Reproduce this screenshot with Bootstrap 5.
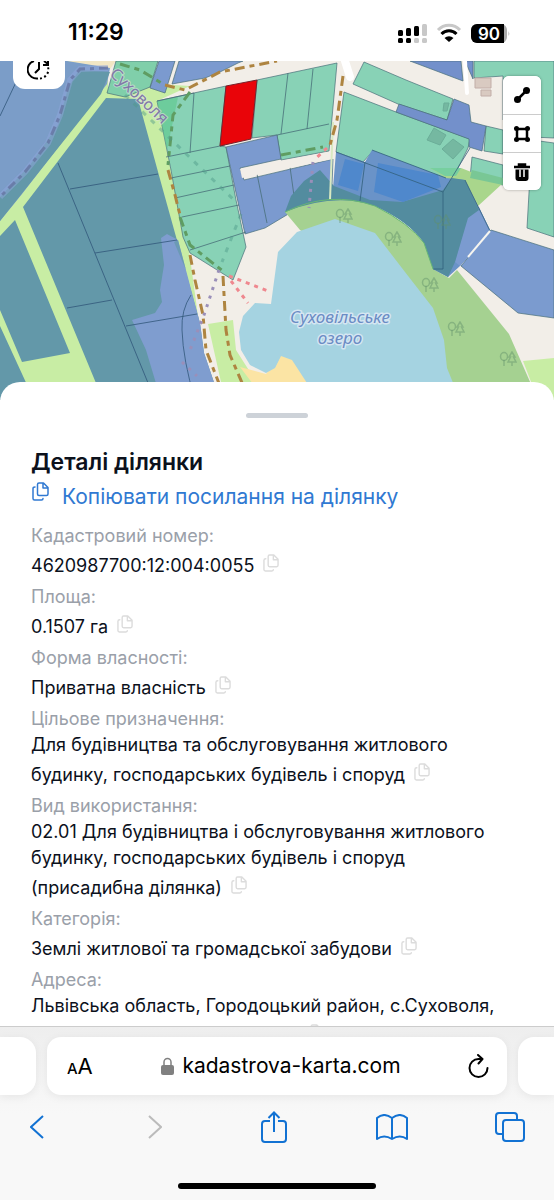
<!DOCTYPE html>
<html lang="uk">
<head>
<meta charset="utf-8">
<meta name="viewport" content="width=device-width, initial-scale=1">
<title>Кадастрова карта</title>
<link rel="stylesheet" href="https://cdn.jsdelivr.net/npm/bootstrap@5.3.0/dist/css/bootstrap.min.css">
<style>
  body { font-family: Inter, "Liberation Sans", sans-serif; color: #0c111c; background: #fff; }
  svg { display: block; }
  .status { height: 61px; padding: 4px 44px 0 68px; }
  .clock { font-size: 23px; font-weight: 600; color: #000; }
  .map-area { height: 339px; }
  .history { left: 13px; width: 52px; height: 28px; border-radius: 0 0 12px 12px; }
  .tools { top: 15px; right: 13px; width: 38px; border-radius: 6px; box-shadow: 0 0 3px #0005; }
  .tools button { height: 38px; }
  .tools button + button { border-top: 1px solid #ccc !important; }
  .sheet { margin-top: -18px; border-radius: 20px 20px 0 0; padding: 31px 31px 0; min-height: 0; }
  .grabber { width: 62px; height: 5px; background: #cdd2d8; }
  h1 { font-size: 23px; line-height: 30px; font-weight: 600; margin: 29px 0 0; }
  .copy-link { color: #3079d2; font-size: 21px; line-height: 30px; margin: 5px 0 11px; gap: 12px; }
  dl { font-size: 18px; line-height: 26px; padding-right: 16px; }
  dt { font-weight: 400; color: #9aa0a9; }
  dd { margin: 0 0 5px; }
  .copy { display: inline-block; height: 23px; padding: 4px 0 0; margin-left: 4px; color: #dcdcdc; vertical-align: baseline; }
  .unseen { display: inline-block; width: 266px; }
  .browser { background: linear-gradient(#eee, #f8f8f8 50%); border-top: 1px solid #ccc; padding-top: 10px; height: 174px; }
  .tab-row { gap: 11px; }
  .tab-edge { width: 36px; height: 58px; background: #fff; box-shadow: 0 2px 10px #0001; }
  .address { height: 58px; border-radius: 14px; padding: 0 18px 0 20px; box-shadow: 0 2px 10px #0001; color: #000; }
  .host { font-size: 21px; }
  .bar { padding: 0 22px 0 15px; margin-top: 10px; color: #1272d3; }
  .bar button { width: 44px; height: 44px; }
  .home-line { width: 198px; height: 6px; background: #000; margin-top: 34px; }
</style>
<script src="https://cdn.jsdelivr.net/npm/bootstrap@5.3.0/dist/js/bootstrap.bundle.min.js"></script>
</head>
<body class="d-flex flex-column vh-100 overflow-hidden">
<svg width="0" height="0" class="position-absolute" aria-hidden="true">
  <symbol id="copy" viewBox="0 0 17 19"><g fill="none" stroke="currentColor" stroke-width="1.5" stroke-linejoin="round" stroke-linecap="round"><path d="M7 1h4.500l4.500 4.500V12q0 1.500-1.500 1.500H7Q5.500 13.500 5.500 12V2.500Q5.500 1 7 1M11 1v5h5M3 5Q1 5 1 6.500V16.500Q1 18 2.500 18H9.500Q11 18 11 16.500"/></g></symbol>
  <symbol id="trees" viewBox="0 0 18 17"><g fill="none" stroke="#62916a" stroke-opacity=".45" stroke-width="1.500"><ellipse cx="5" cy="5.500" rx="3.500" ry="4"/><path d="M5 9v6M13 1l-3 5h1.500L9 11h8l-2.500-5H16zM13 11v4"/></g></symbol>
</svg>

<header class="status d-flex align-items-center justify-content-between flex-shrink-0">
  <span class="clock">11:29</span>
  <svg width="112" height="22" viewBox="0 0 112 22" role="img" aria-label="Мережа, Wi-Fi, батарея 90">
    <g><rect x="0" y="8" width="5" height="6" rx="1.500"/><rect x="8" y="6" width="5" height="8" rx="1.500"/><rect x="16" y="4" width="5" height="10" rx="1.500"/><rect x="24" y="2" width="5" height="12" rx="1.500" fill="#c8c8c8"/><rect x="0" y="16" width="5" height="5" rx="1.500"/><rect x="8" y="16" width="5" height="5" rx="1.500"/><rect x="16" y="16" width="5" height="5" rx="1.500" fill="#c8c8c8"/><rect x="24" y="16" width="5" height="5" rx="1.500" fill="#c8c8c8"/></g>
    <g fill="none" stroke-width="3"><path d="M40 8a15 15 0 0 1 22 0" stroke="#c8c8c8"/><path d="M43.500 12a10.500 10.500 0 0 1 15 0" stroke="#000"/></g><path d="M46.500 16a6.500 6.500 0 0 1 9 0L51 20z"/>
    <rect x="73" y="2" width="36" height="19" rx="6" fill="#aaa"/><path d="M79 2h27v19H79a6 6 0 0 1-6-6V8a6 6 0 0 1 6-6z"/><path d="M110.500 9v5q1.500-2.500 0-5" fill="#aaa"/>
    <text x="91" y="17.500" text-anchor="middle" fill="#fff" font-size="17" font-weight="600">90</text>
  </svg>
</header>

<main class="d-flex flex-column flex-fill overflow-hidden">
<section class="map-area position-relative flex-shrink-0">
  <svg class="w-100 h-100" viewBox="0 61 554 339" preserveAspectRatio="xMidYMin slice" role="img" aria-label="Карта ділянок">
    <rect y="61" width="554" height="339" fill="#f2eee8"/>
    <!-- fields on the left -->
    <path fill="#c8eda4" d="M0 61H108L108 90 157 84 190 86 157 101 175 190 189 250 203 353 220 400H0z"/>
    <path fill="#f2e6c4" d="M66 61H116L110 69z"/>
    <path fill="#7b9dc8" d="M0 61H67L110 68 107 84 22 194 0 221z"/>
    <path fill="#6398a9" d="M79 70L110 72 101 94 0 221V197L30 165 58 125 68 88z"/>
    <path fill="#6398a9" d="M15 220L70 353 22 362 0 310V236zM0 326L34 400H0zM106 98L138 99 163 190 200 323 204 353 220 400H103L23 207 36 190z"/>
    <path fill="#7f9dcf" d="M161 238L167 234 178 240 200 323 204 353 220 400H161L146 350 132 320 155 313 162 302 160 290 164 265z"/>
    <path fill="#6398a9" d="M174 242L178 240 186 270z" opacity=".7"/>
    <g fill="none" stroke="#31577a" stroke-width=".8"><path d="M0 116L18 78M58 163L155 400M70 189L158 174M95 253L177 240M67 308L112 300M126 326L197 314M191 295Q181 310 182 330 183 360 195 400"/></g>
    <path d="M108 68L80 69 70 80 60 115 48 143 25 172 0 197" stroke="#8fa5db" stroke-width="6" opacity=".5" fill="none"/>
    <path d="M108 68L80 69 70 80 60 115 48 143 25 172 0 197" fill="none" stroke="#64719f" stroke-width="3" stroke-dasharray="9 5 4 5" opacity=".75"/>
    <!-- teal and blue parcels -->
    <g stroke="#476f78" stroke-width=".7">
      <path fill="#80cfaa" d="M116 61H158L150 87 125 97 107 93z"/>
      <path fill="#7b9acf" d="M159 61H175L165 93 150 88zM179 61H243L238 63 220 72 205 78 172 84z"/>
      <path fill="#88d2b6" d="M157 101L226 86 220 146 226 147 236 200 246 247 233 280 190 253 183 237 171 170zM257 80L337 63 329 151 281 160 277 135 252 138z"/>
      <path fill="#7b9acf" d="M226 147L277 135 281 159 240 168 244 180 333 159 331 210 290 213 265 228 245 234z"/>
      <path fill="#88d2b6" d="M364 62L406 80 453 99 447 120 398 104 353 84zM344 92L396 112 470 139 468 148 446 192 372 152 363 162 336 152zM474 61H554V138L532 137 503 120V76L474 78zM486 126L503 130V154L484 151zM472 157L503 165V185L470 178zM532 140L554 143V237L527 228z"/>
      <path fill="#7390cb" d="M410 61H461L463 81zM465 61H473V79zM454 99L469 105 471 122 486 126 482 151 469 147 469 139 396 112 399 104 447 120z"/>
      <path fill="#7b9bcf" d="M491 230L554 250V318L518 313 461 266z"/>
    </g>
    <path fill="#5cc88a" opacity=".6" d="M157 101L178 97 167 150z"/>
    <path d="M157 101L194 93 190 153M277 135L329 124M288 73L281 134M313 69L307 129" fill="none" stroke="#476f78" stroke-width=".8"/>
    <path d="M166 157L225 145M171 178L230 166M175 198L234 185M182 217L239 205M190 250L246 232M257 174L267 223M290 167L296 210" fill="none" stroke="#476f78" stroke-width=".8"/>
    <path fill="#f2eee8" d="M240 169L333 151V159L242 178z"/>
    <path fill="#e90409" stroke="#76222b" d="M226 86L257 80 251 139 220 146z"/>
    <!-- park and lake -->
    <path fill="#a5d191" d="M285 212Q330 190 375 206 410 224 424 243L433 269 449 278 457 270 509 334 538 400H445L400 290 300 230z"/>
    <path fill="#c8eda4" d="M523 361L554 358V400H538zM208 324L233 320 236 350 250 372 280 400H225z"/>
    <path fill="#a9d68c" d="M430 168H461L502 184 478 206 465 190z"/>
    <path fill="#77cf9f" d="M430 168H461L456 176 445 176z"/>
    <path fill="#79c795" d="M472 170L503 178V185L470 178z"/>
    <path fill="#6a93c8" d="M336 152L365 162 372 150 446 178 465 180 490 230 468 257 460 266 448 277 433 269 424 243Q410 222 375 206 350 198 332 200z"/>
    <path fill="#7b9bd0" d="M479 207L490 230 468 257 460 266 455 262 467 218z"/>
    <path fill="#538c9f" d="M285 212L291 196 304 181 320 170 334 186 370 200 402 202 443 190 452 178 465 180 479 210 468 218 455 262 448 277 433 269 424 243Q410 222 375 206 335 192 285 212z"/>
    <path fill="#4f88cc" d="M345 159L364 164 358 191 338 185zM378 163L438 175 441 187 403 202 374 192z"/>
    <path fill="none" stroke="#315f7b" stroke-width=".8" d="M365 162L360 201M336 152L443 192 470 148M372 150L446 178M443 192V269H433M465 180L490 231"/>
    <path d="M333 122L330 200" stroke="#d9e9c2" stroke-width="2"/>
    <path d="M285 212Q330 190 375 206 410 224 424 243L433 269" fill="none" stroke="#67b773"/>
    <path d="M490 231L468 257" stroke="#f6f5f0" stroke-width="2"/>
    <path fill="#fbe4a4" d="M240 367L266 374 280 355 293 356 318 400H265z"/>
    <path fill="#a5d3e1" d="M318 400L292 360 281 356 275 368 266 373 250 365 241 350 239 332 243 316 255 303 271 304 278 252 297 232 335 219 375 233 405 272 433 308 444 340 447 368 460 400z"/>
    <g><use href="#trees" x="335" y="208" width="18" height="17"/><use href="#trees" x="384" y="231" width="18" height="17"/><use href="#trees" x="421" y="277" width="18" height="17"/><use href="#trees" x="447" y="321" width="18" height="17"/><use href="#trees" x="499" y="351" width="18" height="17"/><use href="#trees" x="433" y="214" width="18" height="17"/></g>
    <!-- buildings -->
    <g fill="#6fb09b" stroke="#62a28f" opacity=".75"><path d="M434 128L446 135 440 145 427 140zM453 139L464 147 453 159 442 149zM444 103H449L447 111H443z"/></g>
    <g fill="#d9cac1" stroke="#c2aea8"><path d="M475 78H491V88H475zM481 90H491V96H481z"/></g>
    <g fill="none" stroke="#fff" stroke-linecap="round"><path d="M465 61L467 93" stroke-width="4"/><path d="M345 61L350 77" stroke-width="8"/></g>
    <!-- tracks -->
    <g fill="none" stroke="#ae8440" stroke-width="3" stroke-dasharray="10 5 5 5">
      <path d="M165 85L185 90 220 72 277 61M168 170L175 195 180 215M190 255L195 280 203 315 206 350 220 386"/>
      <path d="M223 276L226 330 230 355 243 385"/>
      <path d="M343 76L337 120 330 145"/>
    </g>
    <g fill="none" stroke="#5f9d62" stroke-width="3" stroke-dasharray="10 5 5 5"><path d="M120 64L140 70 163 84M190 92L173 115 168 165M180 217L190 245 224 272M281 155L323 147"/></g>
    <g fill="none" stroke="#4d9987" stroke-width="3" stroke-dasharray="5 7" opacity=".45"><path d="M241 214L222 262M125 95L234 200"/></g>
    <g fill="none" stroke="#ef888f" stroke-width="3" stroke-dasharray="4 5"><path d="M229 276L268 291M231 281L248 303M327 148L314 160"/></g>
    <g fill="none" stroke="#9a8fb9" stroke-width="3" stroke-dasharray="3 6"><path d="M219 270L204 315 190 350M182 362L197 376M313 162L309 208"/></g>
    <!-- place names -->
    <g font-family="Noto Sans, sans-serif" paint-order="stroke" stroke-linejoin="round">
      <text transform="translate(109 75) rotate(43)" font-size="16" fill="#8178a8" stroke="#dfe6df" stroke-opacity=".6" stroke-width="2">Суховоля</text>
      <g font-size="17" font-style="italic" text-anchor="middle" fill="#6a8cc4" stroke="#d5e6f2" stroke-width="3"><text x="340" y="323">Суховільське</text><text x="340" y="344">озеро</text></g>
    </g>
  </svg>
  <button class="history position-absolute top-0 border-0 p-0 bg-white d-flex justify-content-center" aria-label="Історія">
    <svg width="24" height="20" viewBox="0 0 24 20" fill="none" stroke="#000" stroke-width="2"><path d="M7 0A9 9 0 0 0 11 17.500"/><path d="M13 17.500A9 9 0 0 0 21 6" stroke-dasharray="2 2.500"/><path d="M12 1V8L8 12M17 0L21 3M21 0V4H16"/></svg>
  </button>
  <div class="tools position-absolute bg-white d-flex flex-column overflow-hidden">
    <button class="border-0 p-0 bg-white d-flex align-items-center justify-content-center" aria-label="Виміряти відстань"><svg width="18" height="18" viewBox="0 0 18 18"><path d="M4 14L14 4" stroke="#000" stroke-width="2.500"/><circle cx="4.500" cy="13.500" r="3.500"/><circle cx="13.500" cy="4.500" r="3.500"/></svg></button>
    <button class="border-0 p-0 bg-white d-flex align-items-center justify-content-center" aria-label="Виміряти площу"><svg width="18" height="18" viewBox="0 0 18 18"><path d="M4 4H14V14H4z" fill="none" stroke="#000" stroke-width="2.500"/><circle cx="3.500" cy="3.500" r="2.500"/><circle cx="14.500" cy="3.500" r="2.500"/><circle cx="3.500" cy="14.500" r="2.500"/><circle cx="14.500" cy="14.500" r="2.500"/></svg></button>
    <button class="border-0 p-0 bg-white d-flex align-items-center justify-content-center" aria-label="Видалити"><svg width="16" height="18" viewBox="0 0 16 18"><path d="M0 4H16M5 3.500V1.500H11V3.500" fill="none" stroke="#000" stroke-width="2.500"/><path d="M1.500 6.500H14.500V15Q14.500 18 11.500 18H4.500Q1.500 18 1.500 15z"/><path d="M6 6.500V14M10 6.500V14" stroke="#fff" stroke-width="1.500"/></svg></button>
  </div>
</section>

<section class="sheet bg-white position-relative flex-fill overflow-hidden">
  <div class="grabber rounded-pill mx-auto"></div>
  <h1>Деталі ділянки</h1>
  <a href="#" class="copy-link d-flex text-decoration-none text-nowrap"><svg width="19" height="19"><use href="#copy"/></svg>Копіювати посилання на ділянку</a>
  <dl class="mb-0">
    <dt>Кадастровий номер:</dt>
    <dd>4620987700:12:004:0055 <button class="copy border-0 bg-transparent" aria-label="Копіювати"><svg width="16" height="18"><use href="#copy"/></svg></button></dd>
    <dt>Площа:</dt>
    <dd>0.1507 га <button class="copy border-0 bg-transparent" aria-label="Копіювати"><svg width="16" height="18"><use href="#copy"/></svg></button></dd>
    <dt>Форма власності:</dt>
    <dd>Приватна власність <button class="copy border-0 bg-transparent" aria-label="Копіювати"><svg width="16" height="18"><use href="#copy"/></svg></button></dd>
    <dt>Цільове призначення:</dt>
    <dd>Для будівництва та обслуговування житлового будинку, господарських будівель і споруд <button class="copy border-0 bg-transparent" aria-label="Копіювати"><svg width="16" height="18"><use href="#copy"/></svg></button></dd>
    <dt>Вид використання:</dt>
    <dd>02.01 Для будівництва і обслуговування житлового будинку, господарських будівель і споруд (присадибна ділянка) <button class="copy border-0 bg-transparent" aria-label="Копіювати"><svg width="16" height="18"><use href="#copy"/></svg></button></dd>
    <dt>Категорія:</dt>
    <dd>Землі житлової та громадської забудови <button class="copy border-0 bg-transparent" aria-label="Копіювати"><svg width="16" height="18"><use href="#copy"/></svg></button></dd>
    <dt>Адреса:</dt>
    <dd>Львівська область, Городоцький район, с.Суховоля,<br><span class="unseen"></span> <button class="copy border-0 bg-transparent" aria-label="Копіювати"><svg width="16" height="18"><use href="#copy"/></svg></button></dd>
  </dl>
</section>
</main>

<footer class="browser flex-shrink-0">
  <div class="tab-row d-flex">
    <div class="tab-edge rounded-end-4"></div>
    <div class="address bg-white flex-fill d-flex align-items-center justify-content-between">
      <button class="border-0 bg-transparent p-0" aria-label="Параметри тексту"><svg width="27" height="24" viewBox="0 0 27 24"><text x="0" y="20" font-size="15" font-weight="500">A</text><text x="10.500" y="20" font-size="22">A</text></svg></button>
      <a href="#" class="d-flex align-items-center gap-2 text-black text-decoration-none"><svg width="13" height="18" viewBox="0 0 13 18"><rect y="8" width="13" height="10" rx="2" fill="#808080"/><path d="M3 9V5a3.500 3.500 0 0 1 7 0v4" fill="none" stroke="#808080" stroke-width="1.500"/></svg><span class="host">kadastrova-karta.com</span></a>
      <button class="border-0 bg-transparent p-0" aria-label="Оновити"><svg width="21" height="25" viewBox="0 0 21 25" fill="none" stroke="#000" stroke-width="2" stroke-linecap="round" stroke-linejoin="round"><path d="M19.500 14A9 9 0 1 1 10.500 5H14M10 1L14.500 5 10.500 9.500"/></svg></button>
    </div>
    <div class="tab-edge rounded-start-4"></div>
  </div>
  <nav class="bar d-flex justify-content-between" aria-label="Навігація">
    <button class="border-0 bg-transparent p-0 d-flex align-items-center justify-content-center" aria-label="Назад"><svg width="14" height="24" viewBox="0 0 14 24" fill="none" stroke="#1272d3" stroke-width="2"><path d="M13 1L1 12 13 23"/></svg></button>
    <button class="border-0 bg-transparent p-0 d-flex align-items-center justify-content-center" aria-label="Вперед"><svg width="14" height="24" viewBox="0 0 14 24" fill="none" stroke="#bbb" stroke-width="2"><path d="M1 1L13 12 1 23"/></svg></button>
    <button class="border-0 bg-transparent p-0 d-flex align-items-center justify-content-center" aria-label="Поділитися"><svg width="26" height="32" viewBox="0 0 26 32" fill="none" stroke="#1272d3" stroke-width="2"><path d="M9 10H4Q1 10 1 13V28Q1 31 4 31H22Q25 31 25 28V13Q25 10 22 10H17M13 21V2M7.500 7L13 1.500 18.500 7"/></svg></button>
    <button class="border-0 bg-transparent p-0 d-flex align-items-center justify-content-center" aria-label="Закладки"><svg width="32" height="26" viewBox="0 0 32 26" fill="none" stroke="#1272d3" stroke-width="2" stroke-linejoin="round"><path d="M16 4Q8-2 1 4V25Q8 20 16 25 24 20 31 25V4Q24-2 16 4V25"/></svg></button>
    <button class="border-0 bg-transparent p-0 d-flex align-items-center justify-content-center" aria-label="Вкладки"><svg width="30" height="30" viewBox="0 0 30 30" fill="none" stroke="#1272d3" stroke-width="2"><rect x="8" y="8" width="21" height="21" rx="3"/><path d="M8 22H4Q1 22 1 19V4Q1 1 4 1H19Q22 1 22 4V8"/></svg></button>
  </nav>
  <div class="home-line rounded-pill mx-auto"></div>
</footer>
</body>
</html>
